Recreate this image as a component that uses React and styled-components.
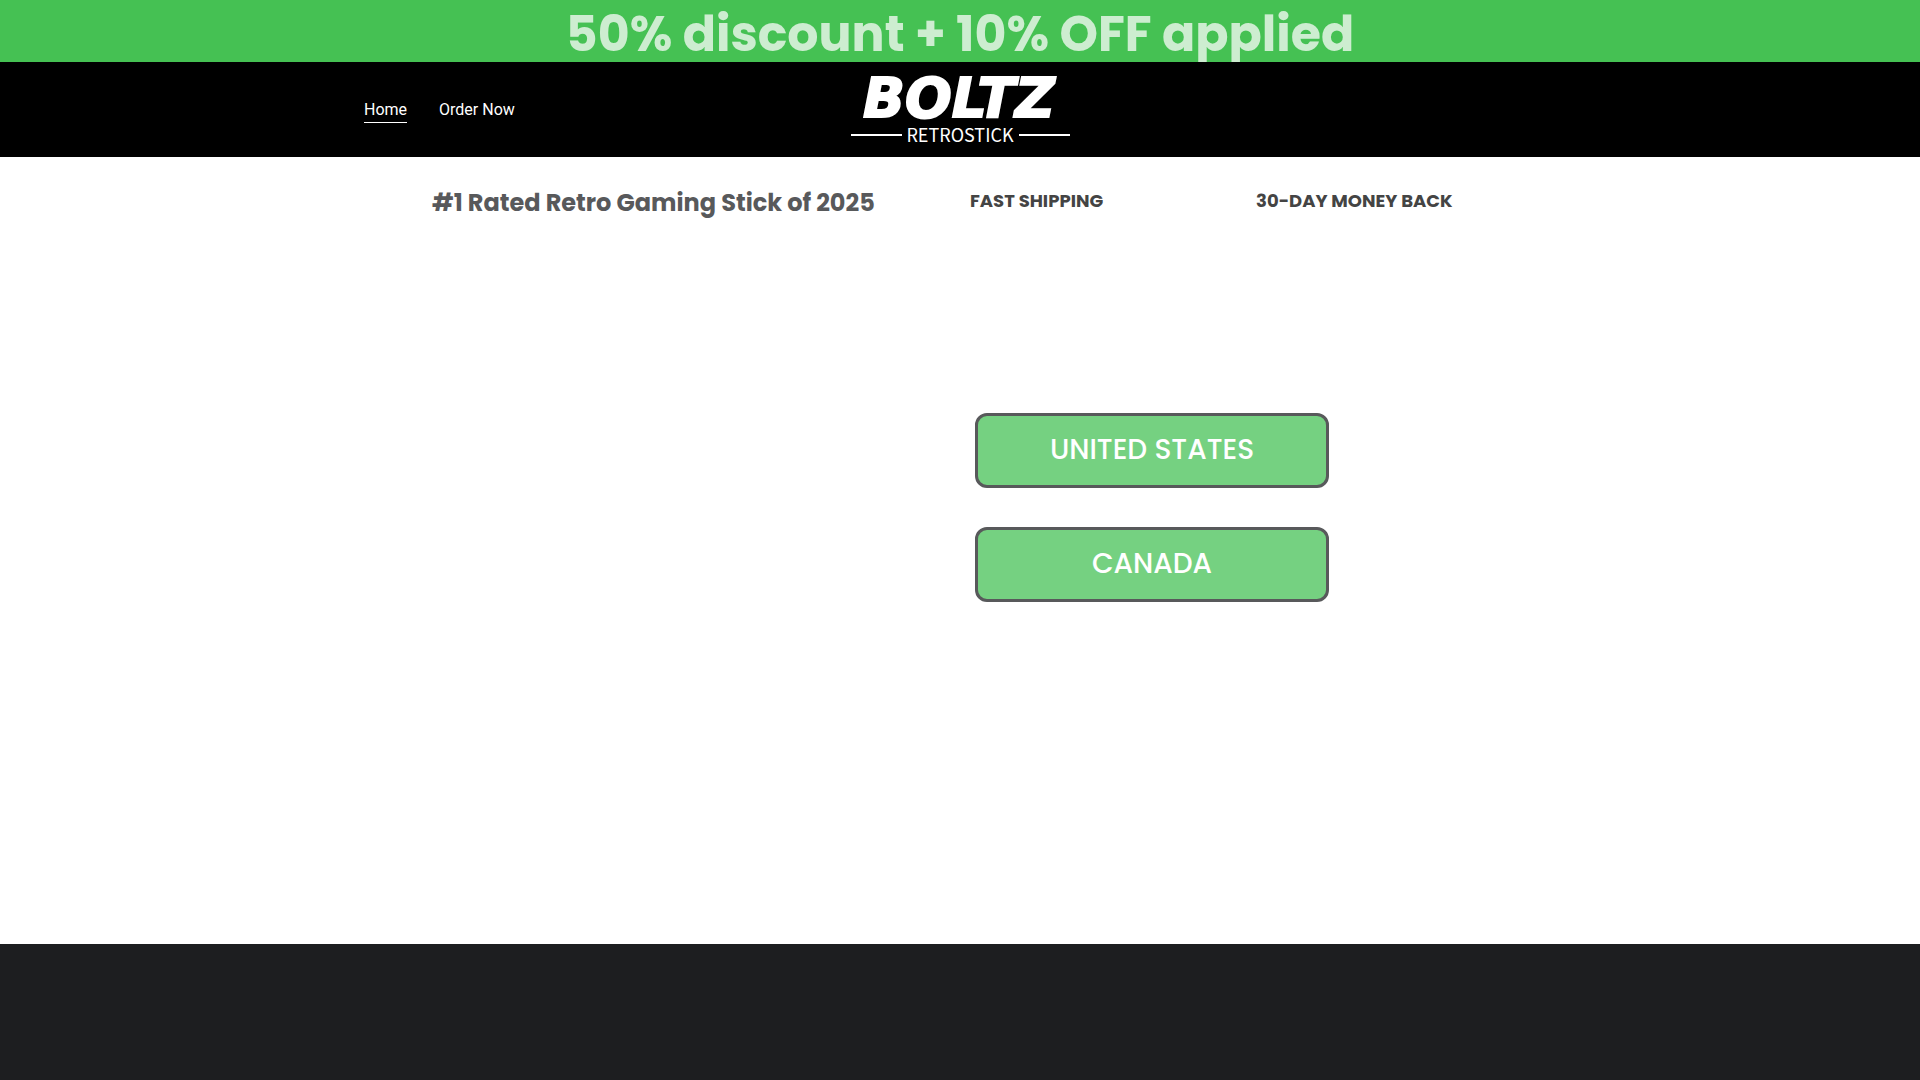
import React from "react";
import styled, { createGlobalStyle } from "styled-components";

const links = [
  { label: "Home", href: "#home", active: true },
  { label: "Order Now", href: "#order", active: false },
];

const countries = ["UNITED STATES", "CANADA"];

const Logo = () => (
  <LogoSvg width="240" height="71" viewBox="0 0 240 71" role="img" aria-label="Boltz Retrostick">
    <text
      x="119"
      y="43"
      textAnchor="middle"
      fill="#fff"
      stroke="#fff"
      strokeWidth="2"
      fontFamily="'DejaVu Sans', sans-serif"
      fontSize="55"
      fontWeight="700"
      fontStyle="italic"
    >
      BOLTZ
    </text>
    <g stroke="#fff" strokeWidth="2">
      <path d="M11 61H62" />
      <path d="M179 61H230" />
    </g>
    <text
      x="120"
      y="68"
      textAnchor="middle"
      fill="#fff"
      fontFamily="'Noto Sans CJK SC', sans-serif"
      fontSize="18"
    >
      RETROSTICK
    </text>
  </LogoSvg>
);

const App = () => {
  return (
    <Page>
      <GlobalStyle />
      <Banner>50% discount + 10% OFF applied</Banner>
      <Header>
        <HeaderInner>
          <Nav>
            {links.map((link) => (
              <NavLink key={link.label} href={link.href} $active={link.active}>
                {link.label}
              </NavLink>
            ))}
          </Nav>
          <LogoLink href="#home">
            <Logo />
          </LogoLink>
        </HeaderInner>
      </Header>
      <Main>
        <Perks>
          <Title>#1 Rated Retro Gaming Stick of 2025</Title>
          <Perk>FAST SHIPPING</Perk>
          <Perk>30-DAY MONEY BACK</Perk>
        </Perks>
        <Content>
          <Countries>
            {countries.map((country) => (
              <CountryButton key={country} type="button">
                {country}
              </CountryButton>
            ))}
          </Countries>
        </Content>
      </Main>
      <Footer />
    </Page>
  );
};

export default App;

const GlobalStyle = createGlobalStyle`
  * {
    box-sizing: border-box;
  }

  body {
    margin: 0;
    background-color: #fff;
    font-family: Poppins, Inter, sans-serif;
  }
`;

const Page = styled.div`
  display: flex;
  flex-direction: column;
  min-height: 100vh;
`;

const Banner = styled.div`
  height: 62px;
  padding-top: 4px;
  overflow: hidden;
  background-color: #45c153;
  color: #cdedd0;
  font-size: 49px;
  font-weight: 700;
  line-height: 60px;
  text-align: center;
`;

const Header = styled.header`
  background-color: #000;
`;

const HeaderInner = styled.div`
  display: grid;
  grid-template-columns: 1fr auto 1fr;
  align-items: center;
  max-width: 1192px;
  min-height: 95px;
  margin: 0 auto;
`;

const Nav = styled.nav`
  display: flex;
  gap: 32px;
`;

const NavLink = styled.a`
  padding-top: 2px;
  border-bottom: 1px solid ${(props) => (props.$active ? "#fff" : "transparent")};
  color: #fff;
  font-family: Roboto, sans-serif;
  font-size: 16px;
  line-height: 24px;
  text-decoration: none;
`;

const LogoLink = styled.a`
  display: flex;
`;

const LogoSvg = styled.svg`
  overflow: visible;
`;

const Main = styled.main`
  flex: 1;
`;

const Perks = styled.div`
  display: grid;
  grid-template-columns: 538px 286px auto;
  align-items: start;
  max-width: 1056px;
  margin: 0 auto;
  padding-top: 28px;
`;

const Title = styled.h1`
  margin: 0;
  color: #58595b;
  font-size: 24px;
  font-weight: 700;
  line-height: 36px;
`;

const Perk = styled.p`
  margin: 0;
  color: #444;
  font-size: 18px;
  font-weight: 700;
  line-height: 32px;
`;

const Content = styled.section`
  display: flex;
  max-width: 1192px;
  margin: 0 auto;
  padding: 192px 0 80px;
`;

const Countries = styled.div`
  display: flex;
  flex-direction: column;
  gap: 39px;
  width: 354px;
  margin-left: 611px;
`;

const CountryButton = styled.button`
  height: 75px;
  padding: 0 16px 2px;
  border: 3px solid #58595b;
  border-radius: 12px;
  background-color: #75d181;
  color: #fff;
  font-family: inherit;
  font-size: 28px;
  font-weight: 500;
  line-height: 40px;
  cursor: pointer;
`;

const Footer = styled.footer`
  height: 136px;
  background-color: #1d1e20;
`;
